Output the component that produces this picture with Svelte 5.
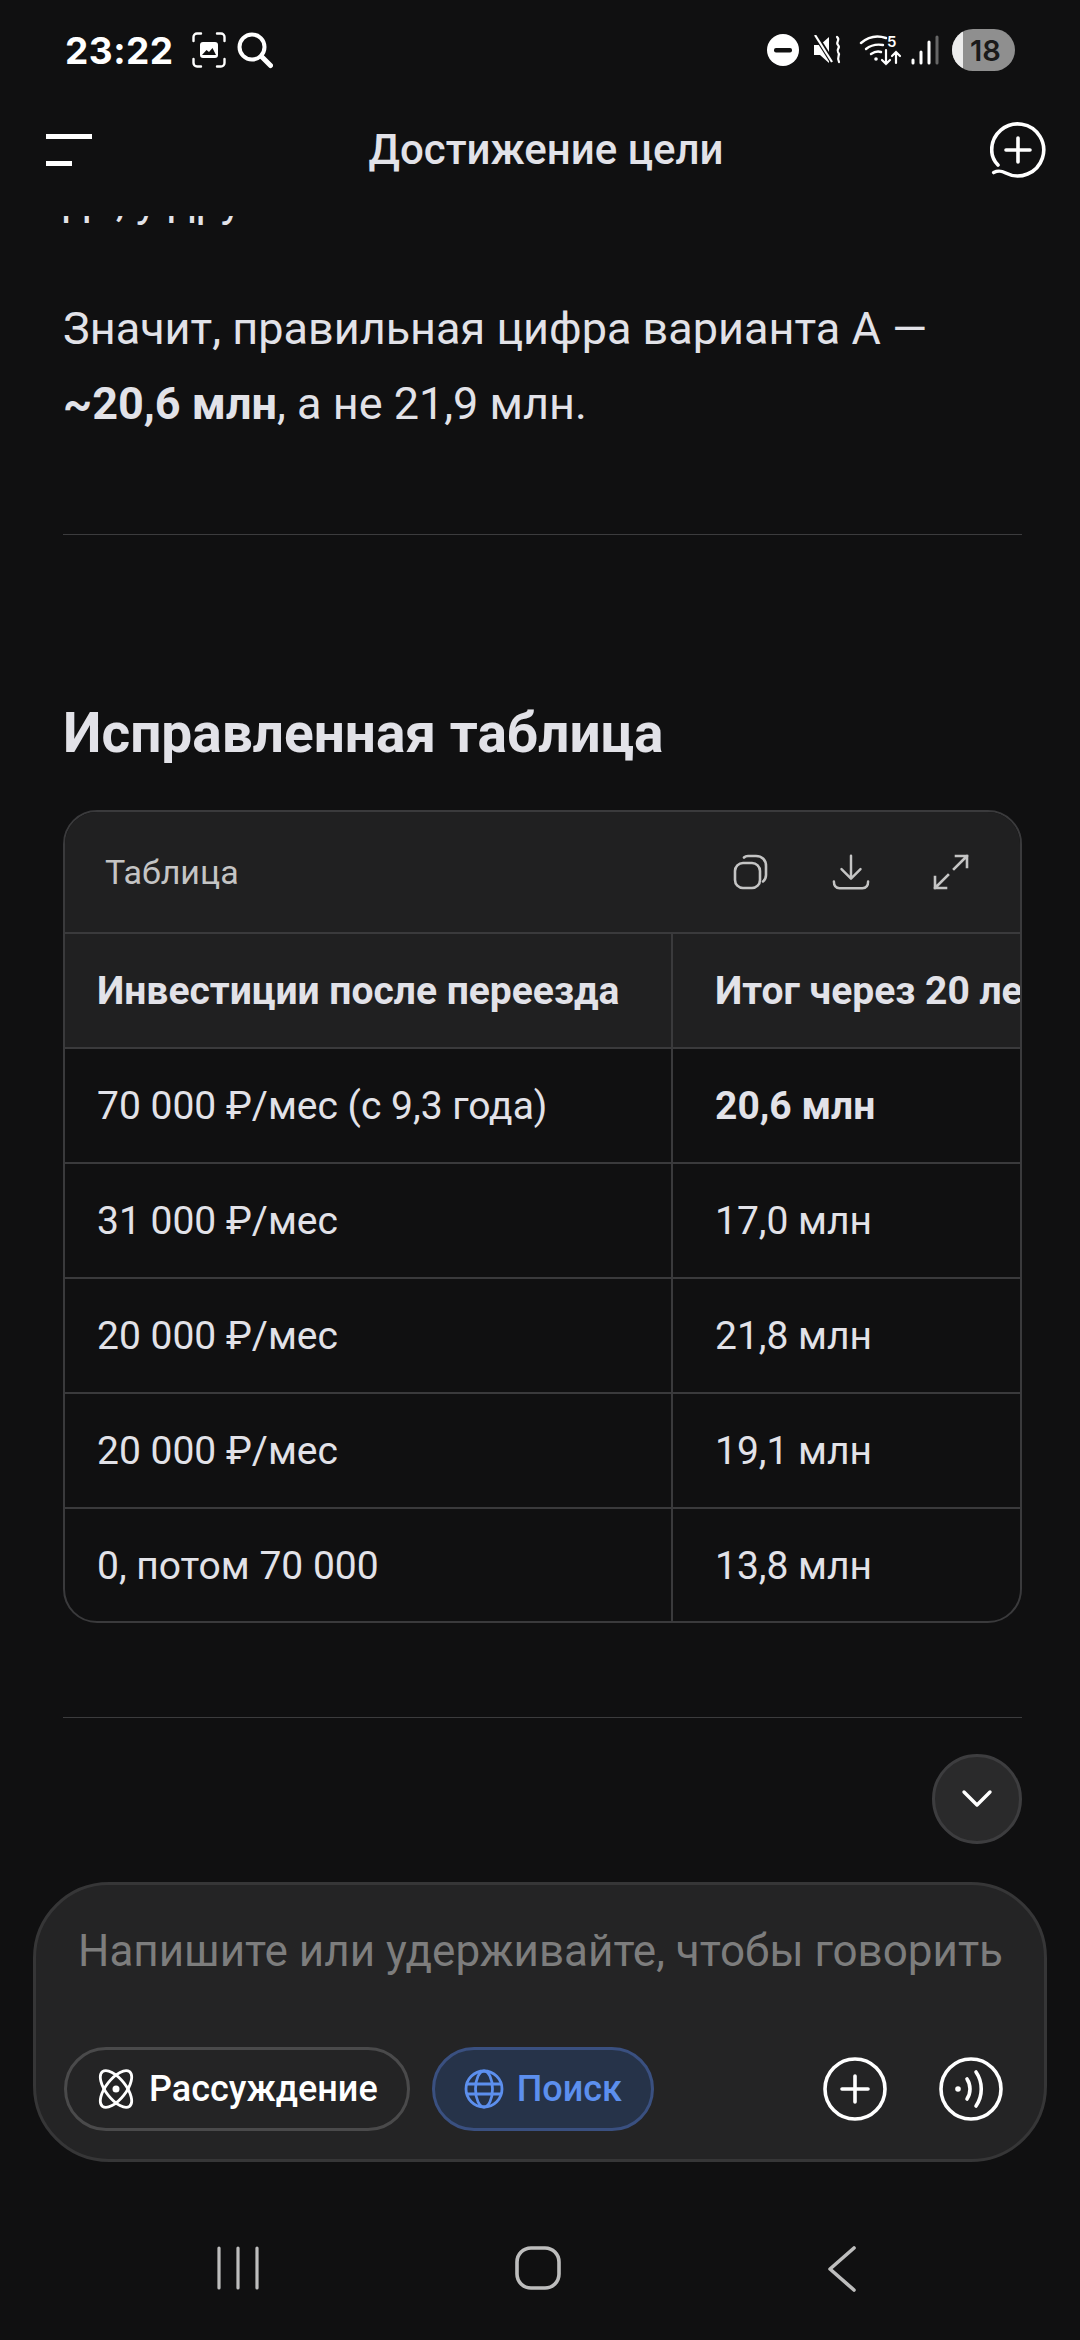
<script>
  const rows = [
    ['70 000 ₽/мес (с 9,3 года)', '20,6 млн', true],
    ['31 000 ₽/мес', '17,0 млн', false],
    ['20 000 ₽/мес', '21,8 млн', false],
    ['20 000 ₽/мес', '19,1 млн', false],
    ['0, потом 70 000', '13,8 млн', false]
  ];
</script>

<div class="screen">
  <div class="status">
    <div class="status-left">
      <span class="time">23:22</span>
      <svg class="ic-shot" viewBox="0 0 34 36" fill="none" stroke="#fff" stroke-width="2.4" stroke-linecap="round">
        <path d="M1.500 9V5a3.500 3.500 0 0 1 3.500-3.500h4M25 1.500h4a3.500 3.500 0 0 1 3.500 3.500v4M32.500 27v4a3.500 3.500 0 0 1-3.500 3.500h-4M9 34.500H5a3.500 3.500 0 0 1-3.500-3.500v-4" />
        <rect x="8" y="10" width="18" height="16" rx="3" fill="#fff" stroke="none" />
        <path d="M10 23l4.500-5 2.500 2 3.500-4 3.500 7z" fill="#111" stroke="none" />
      </svg>
      <svg class="ic-search" viewBox="0 0 36 37" fill="none" stroke="#fff" stroke-linecap="round">
        <circle cx="15" cy="15" r="12.500" stroke-width="4" />
        <path d="M24.500 24.500l9 9" stroke-width="5" />
      </svg>
    </div>
    <div class="status-right">
      <svg class="ic-dnd" viewBox="0 0 32 32">
        <circle cx="16" cy="16" r="16" fill="#fff" />
        <rect x="7" y="14" width="18" height="4.500" rx="2" fill="#111" />
      </svg>
      <svg class="ic-mute" viewBox="0 0 30 30" fill="none">
        <path d="M1 10h6l9-8v26l-9-8H1z" fill="#fff" />
        <path d="M3 1l17 27" stroke="#111" stroke-width="5" />
        <path d="M2 0l17 27" stroke="#fff" stroke-width="2.200" />
        <path d="M24 2c4 3-2 5 1 8 3 3-2 4 0 7 3 3-2 5 1 10" stroke="#fff" stroke-width="2.200" stroke-linecap="round" />
      </svg>
      <svg class="ic-wifi" viewBox="0 0 44 34" fill="none" stroke="#fff" stroke-linecap="round">
        <path d="M2 10c7-6 16-8 25-5" stroke-width="2.400" />
        <path d="M7 16c5-4 11-5 17-4" stroke-width="2.400" />
        <path d="M12 21c3-2 7-3 10-2" stroke-width="2.400" />
        <circle cx="17" cy="26" r="1.800" fill="#fff" stroke="none" />
        <path d="M27 17v14M23 27l4 4 4-4M37 30V19M33 23l4-4 4 4" stroke-width="2.200" />
        <text x="28" y="14" class="wifi-five">5</text>
      </svg>
      <svg class="ic-signal" viewBox="0 0 28 30" stroke-linecap="round" fill="none" stroke="#fff" stroke-width="3">
        <path d="M2 28v-3M10 28V17M18 28V7" />
        <path d="M26 28V2" stroke="#666" />
      </svg>
      <div class="battery"><span class="battery-fill"></span><span class="battery-num">18</span></div>
    </div>
  </div>

  <div class="topbar">
    <svg class="ic-menu" viewBox="0 0 46 32" fill="#fff">
      <rect x="0" y="0" width="46" height="5" />
      <rect x="0" y="27" width="26" height="5" />
    </svg>
    <h1>Достижение цели</h1>
    <svg class="ic-new" viewBox="0 0 56 56" fill="none" stroke="#fff" stroke-width="3.600" stroke-linecap="round">
      <path d="M8 43C3 38 1.700 33 1.700 28a26 26 0 1 1 14 23c-4-2-7-3-12-.5" />
      <path d="M28 16v24M16 28h24" />
    </svg>
  </div>

  <div class="content">
    <div class="clipped"><p class="para">до, у других</p></div>
    <p class="para first">Значит, правильная цифра варианта А —<br /><strong>~20,6 млн</strong>, а не 21,9 млн.</p>
    <hr class="rule rule-top" />
    <h2>Исправленная таблица</h2>

    <div class="card">
      <div class="card-bar">
        <span class="card-title">Таблица</span>
        <div class="card-actions">
          <svg viewBox="0 0 38 38" fill="none" stroke="#c4c4c4" stroke-width="2.600" stroke-linecap="round">
            <rect x="3" y="10" width="25" height="25" rx="8" />
            <path d="M12 4.500c1-1 2-1.500 4-1.500h8c6 0 10 4 10 10v9c0 3-1 5-3 6.500" />
          </svg>
          <svg viewBox="0 0 40 38" fill="none" stroke="#c4c4c4" stroke-width="2.600" stroke-linecap="round" stroke-linejoin="round">
            <path d="M20 2v23M10 16l10 10 10-10" />
            <path d="M2 29c0 4 2 7 6 7h24c4 0 6-3 6-7" />
          </svg>
          <svg viewBox="0 0 38 38" fill="none" stroke="#c4c4c4" stroke-width="2.600" stroke-linecap="square">
            <path d="M22 16L35 3M24 3h11v11" />
            <path d="M16 22L3 35M14 35H3V24" />
          </svg>
        </div>
      </div>
      <div class="scroller">
        <div class="tr head">
          <div class="c1">Инвестиции после переезда</div>
          <div class="c2">Итог через 20 лет</div>
        </div>
        {#each rows as r}
          <div class="tr">
            <div class="c1">{r[0]}</div>
            <div class="c2" class:bold={r[2]}>{r[1]}</div>
          </div>
        {/each}
      </div>
    </div>

    <hr class="rule rule-bottom" />
    <button class="to-bottom" aria-label="Вниз">
      <svg viewBox="0 0 32 20" fill="none" stroke="#fff" stroke-width="3.400" stroke-linecap="round" stroke-linejoin="round">
        <path d="M3 3l13 13L29 3" />
      </svg>
    </button>
  </div>

  <div class="composer">
    <div class="placeholder">Напишите или удерживайте, чтобы говорить</div>
    <div class="tools">
      <div class="chip">
        <svg viewBox="0 0 40 40" fill="none" stroke="#fff" stroke-width="2.800">
          <ellipse cx="20" cy="20" rx="10" ry="22" transform="rotate(38 20 20)" />
          <ellipse cx="20" cy="20" rx="10" ry="22" transform="rotate(-38 20 20)" />
          <circle cx="20" cy="20" r="3.500" fill="#fff" stroke="none" />
        </svg>
        <span>Рассуждение</span>
      </div>
      <div class="chip active">
        <svg viewBox="0 0 40 40" fill="none" stroke="#5c8fee" stroke-width="2.800">
          <circle cx="20" cy="20" r="18" />
          <ellipse cx="20" cy="20" rx="8.500" ry="18" />
          <path d="M2 15h36M2 25h36" />
        </svg>
        <span>Поиск</span>
      </div>
      <div class="round-btns">
        <svg viewBox="0 0 64 64" fill="none" stroke="#fff" stroke-width="3.600" stroke-linecap="round">
          <circle cx="32" cy="32" r="30" />
          <path d="M32 19v26M19 32h26" />
        </svg>
        <svg viewBox="0 0 64 64" fill="none" stroke="#fff" stroke-width="3.600" stroke-linecap="round">
          <circle cx="32" cy="32" r="30" />
          <circle cx="19" cy="32" r="2.800" fill="#fff" stroke="none" />
          <path d="M28 22c4 6 4 14 0 20M37 15c7 10 7 24 0 34" />
        </svg>
      </div>
    </div>
  </div>

  <div class="navbar">
    <svg class="nav-recent" viewBox="0 0 44 44" fill="none" stroke="#bdbdbd" stroke-width="3.200" stroke-linecap="round">
      <path d="M3 2v40M22 2v40M41 2v40" />
    </svg>
    <svg class="nav-home" viewBox="0 0 46 44" fill="none" stroke="#bdbdbd" stroke-width="3.600">
      <rect x="2" y="2" width="42" height="40" rx="14" />
    </svg>
    <svg class="nav-back" viewBox="0 0 30 46" fill="none" stroke="#bdbdbd" stroke-width="3.600" stroke-linecap="round" stroke-linejoin="round">
      <path d="M27 2L3 23l24 21" />
    </svg>
  </div>
</div>

<style>
  :global(body) {
    margin: 0;
    background: #101011;
  }

  .screen {
    width: 1080px;
    height: 2340px;
    background: #101011;
    color: #e2e2e8;
    font-family: Roboto, "Noto Sans", sans-serif;
    display: flex;
    flex-direction: column;
    overflow: hidden;
  }

  .status {
    height: 100px;
    flex: none;
    box-sizing: border-box;
    padding: 0 65px 0 65px;
    display: flex;
    justify-content: space-between;
    align-items: center;
    color: #fff;
    font-family: Inter, sans-serif;
  }
  .status-left, .status-right {
    display: flex;
    align-items: center;
  }
  .time {
    font-size: 37px;
    font-weight: 700;
    letter-spacing: 0.5px;
  }
  .ic-shot { width: 34px; height: 36px; margin-left: 18px; }
  .ic-search { width: 36px; height: 37px; margin-left: 11px; }
  .ic-dnd { width: 32px; height: 32px; }
  .ic-mute { width: 30px; height: 30px; margin-left: 14px; }
  .ic-wifi { width: 44px; height: 34px; margin-left: 16px; }
  .wifi-five { font-size: 15px; font-weight: 600; fill: #fff; stroke: none; }
  .ic-signal { width: 28px; height: 30px; margin-left: 8px; }
  .battery {
    position: relative;
    width: 63px;
    height: 42px;
    margin-left: 13px;
    border-radius: 21px;
    background: #8f8f8f;
    overflow: hidden;
    display: flex;
    align-items: center;
    justify-content: center;
  }
  .battery-fill {
    position: absolute;
    left: 0;
    top: 0;
    bottom: 0;
    width: 11px;
    background: #ececec;
  }
  .battery-num {
    position: relative;
    font-size: 29px;
    font-weight: 600;
    color: #1a1a1a;
    margin-left: 4px;
  }

  .topbar {
    height: 100px;
    flex: none;
    position: relative;
    display: flex;
    align-items: center;
    justify-content: space-between;
    padding: 0 34px 0 46px;
  }
  .ic-menu { width: 46px; height: 32px; }
  .ic-new { width: 56px; height: 56px; }
  h1 {
    position: absolute;
    left: 0;
    right: 0;
    text-align: center;
    margin: -2px 0 0 12px;
    font-size: 42px;
    font-weight: 500;
    color: #e2e2e8;
  }

  .content {
    flex: 1;
    position: relative;
    padding: 0 58px 0 63px;
  }
  .clipped {
    height: 12px;
    margin-top: 16px;
    overflow: hidden;
    display: flex;
    align-items: flex-end;
  }
  .para {
    margin: 0;
    flex: none;
    font-size: 45px;
    line-height: 75px;
    color: #e2e2e8;
    white-space: nowrap;
  }
  .clipped .para { margin-bottom: -10px; }
  .first { margin-top: 63px; }
  strong { font-weight: 700; }
  .rule {
    border: 0;
    height: 1px;
    background: #3c3c3e;
    margin: 0;
  }
  .rule-top { margin-top: 93px; }
  h2 {
    margin: 167px 0 0;
    font-size: 55px;
    line-height: 62px;
    font-weight: 700;
    color: #e2e2e8;
  }
  .card {
    margin-top: 46px;
    height: 813px;
    box-sizing: border-box;
    border: 2px solid #3a3a3c;
    border-radius: 34px;
    overflow: hidden;
  }
  .card-bar {
    height: 120px;
    background: #202021;
    display: flex;
    align-items: center;
    justify-content: space-between;
    padding: 0 50px 0 40px;
  }
  .card-title {
    font-size: 34px;
    color: #c4c4c4;
  }
  .card-actions {
    display: flex;
    align-items: center;
    gap: 62px;
  }
  .card-actions svg { width: 38px; height: 38px; display: block; }
  .scroller { overflow: hidden; }
  .tr {
    display: grid;
    grid-template-columns: 608px 420px;
    height: 115px;
    box-sizing: border-box;
    border-top: 2px solid #3a3a3c;
    font-size: 39px;
    color: #e2e2e8;
    white-space: nowrap;
  }
  .tr > div {
    display: flex;
    align-items: center;
  }
  .c1 {
    padding-left: 32px;
    border-right: 2px solid #3a3a3c;
  }
  .c2 { padding-left: 42px; }
  .head {
    background: #202021;
    font-weight: 700;
  }
  .bold { font-weight: 700; }

  .rule-bottom { margin-top: 94px; }
  .to-bottom {
    position: absolute;
    right: 58px;
    top: 1554px;
    width: 90px;
    height: 90px;
    padding: 0;
    border-radius: 50%;
    border: 3px solid #3d3d3f;
    background: #2a2a2b;
    display: flex;
    align-items: center;
    justify-content: center;
  }
  .to-bottom svg { width: 32px; height: 20px; }

  .composer {
    flex: none;
    margin: 0 33px 0;
    height: 280px;
    box-sizing: border-box;
    border: 3px solid #363637;
    border-radius: 76px;
    background: #242425;
    padding: 0 28px;
    display: flex;
    flex-direction: column;
  }
  .placeholder {
    margin-top: 40px;
    padding-left: 14px;
    font-size: 44px;
    line-height: 52px;
    color: #7d7d7d;
    white-space: nowrap;
  }
  .tools {
    margin-top: 70px;
    display: flex;
    align-items: center;
    gap: 22px;
  }
  .chip {
    height: 84px;
    box-sizing: border-box;
    border: 3px solid #4a4a4b;
    border-radius: 42px;
    display: flex;
    align-items: center;
    gap: 13px;
    padding: 0 29px;
    font-size: 36px;
    font-weight: 500;
    color: #fff;
  }
  .chip svg { width: 40px; height: 40px; }
  .chip.active {
    background: #263349;
    border-color: #3a5080;
    color: #5c8fee;
  }
  .round-btns {
    margin-left: auto;
    margin-right: 13px;
    display: flex;
    gap: 52px;
  }
  .round-btns svg { width: 64px; height: 64px; display: block; }

  .navbar {
    flex: none;
    height: 178px;
    display: flex;
    align-items: flex-start;
    box-sizing: border-box;
    padding: 84px 0 0 216px;
  }
  .nav-recent { width: 44px; height: 44px; }
  .nav-home { width: 46px; height: 44px; margin-left: 255px; }
  .nav-back { width: 30px; height: 46px; margin-left: 266px; }
</style>
